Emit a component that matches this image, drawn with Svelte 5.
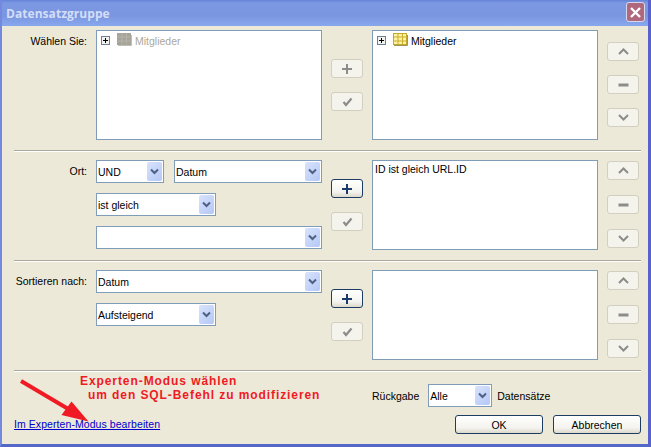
<script>
</script>

{#snippet chevron()}
  <span class="arrow">
    <svg width="9" height="7" viewBox="0 0 9 7"><path d="M1 1.5 L4.5 5 L8 1.5" fill="none" stroke="#4d6185" stroke-width="2"/></svg>
  </span>
{/snippet}

{#snippet select(text, cls)}
  <div class="select {cls}"><span class="value">{text}</span>{@render chevron()}</div>
{/snippet}

{#snippet plusBtn(active)}
  <div class="btn" class:active>
    <svg width="12" height="12" viewBox="0 0 12 12"><path d="M6 1 V11 M1 6 H11" stroke={active ? '#1d3a6c' : '#8c8c8c'} stroke-width="2" fill="none"/></svg>
  </div>
{/snippet}

{#snippet checkBtn()}
  <div class="btn">
    <svg width="11" height="10" viewBox="0 0 11 10"><path d="M1.5 5 L4 8 L9.5 1.5" stroke="#8c8c8c" stroke-width="2.2" fill="none"/></svg>
  </div>
{/snippet}

{#snippet sideBtns()}
  <div class="side">
    <div class="btn"><svg width="11" height="7" viewBox="0 0 11 7"><path d="M1 6 L5.5 1.5 L10 6" stroke="#8c8c8c" stroke-width="2" fill="none"/></svg></div>
    <div class="btn"><svg width="11" height="4" viewBox="0 0 11 4"><path d="M0.5 2 H10.5" stroke="#8c8c8c" stroke-width="3" fill="none"/></svg></div>
    <div class="btn"><svg width="11" height="7" viewBox="0 0 11 7"><path d="M1 1 L5.5 5.5 L10 1" stroke="#8c8c8c" stroke-width="2" fill="none"/></svg></div>
  </div>
{/snippet}

{#snippet treeRow(name, on)}
  <div class="tree" class:off={!on}>
    <span class="expander"><svg width="9" height="9" viewBox="0 0 9 9"><rect x=".5" y=".5" width="8" height="8" fill="#f2f2ee" stroke="#6f8096"/><path d="M2 4.5 H7 M4.5 2 V7" stroke="#000"/></svg></span>
    {#if on}
      <svg class="table" width="15" height="13" viewBox="0 0 15 13"><rect x=".5" y=".5" width="13" height="11" fill="#fdf3a0" stroke="#c2a82c"/><path d="M.5 4 H13.5 M.5 8 H13.5 M5 .5 V11.5 M9.5 .5 V11.5" stroke="#c9ae30"/><path d="M1 12.5 H14.5 V2" stroke="#9c9560" fill="none"/></svg>
    {:else}
      <svg class="table" width="15" height="13" viewBox="0 0 15 13"><rect x="0" y="0" width="14" height="12" fill="#a6a49a"/><path d="M.5 4 H13.5 M.5 8 H13.5 M5 .5 V11.5 M9.5 .5 V11.5" stroke="#b5b3a9"/><path d="M1 12.5 H14.5 V2" stroke="#c0beb2" fill="none"/></svg>
    {/if}
    <span>{name}</span>
  </div>
{/snippet}

<div class="window">
  <header class="titlebar">
    <span class="title">Datensatzgruppe</span>
    <span class="close"><svg width="11" height="11" viewBox="0 0 11 11"><path d="M1 1 L10 10 M10 1 L1 10" stroke="#fff" stroke-width="2.4"/></svg></span>
  </header>

  <section class="row one">
    <div class="label">Wählen Sie:</div>
    <div class="list left">{@render treeRow('Mitglieder', false)}</div>
    <div class="mid">{@render plusBtn(false)}{@render checkBtn()}</div>
    <div class="list">{@render treeRow('Mitglieder', true)}</div>
    {@render sideBtns()}
  </section>
  <hr />

  <section class="row two">
    <div class="label">Ort:</div>
    <div class="fields">
      <div class="pair">{@render select('UND', 'w68')}{@render select('Datum', 'grow pad')}</div>
      {@render select('ist gleich', 'w120')}
      {@render select('', 'full')}
    </div>
    <div class="mid">{@render plusBtn(true)}{@render checkBtn()}</div>
    <div class="list note">ID ist gleich URL.ID</div>
    {@render sideBtns()}
  </section>
  <hr />

  <section class="row three">
    <div class="label">Sortieren nach:</div>
    <div class="fields">
      {@render select('Datum', 'full')}
      {@render select('Aufsteigend', 'w120')}
    </div>
    <div class="mid">{@render plusBtn(true)}{@render checkBtn()}</div>
    <div class="list"></div>
    {@render sideBtns()}
  </section>
  <hr />

  <footer class="footer">
    <a class="link" href="#expert">Im Experten-Modus bearbeiten</a>
    <div class="footer-right">
      <div class="return">
        <span>Rückgabe</span>
        {@render select('Alle', 'w64 shifted')}
        <span>Datensätze</span>
      </div>
      <div class="actions">
        <div class="action">OK</div>
        <div class="action">Abbrechen</div>
      </div>
    </div>
  </footer>

  <div class="note-red"><div>Experten-Modus wählen</div><div class="second">um den SQL-Befehl zu modifizieren</div></div>
  <svg class="red-arrow" width="100" height="62" viewBox="0 0 100 62"><path d="M21 21 L70 50" stroke="#f01a24" stroke-width="4" fill="none"/><path d="M71.5 41.5 L61.5 55 L88.5 61.5 Z" fill="#f01a24"/></svg>
</div>

<style>
  :global(body) { margin: 0; }
  .window {
    position: relative;
    width: 651px;
    height: 447px;
    box-sizing: border-box;
    background: #ece9d8;
    border-left: 2px solid #7488e0;
    border-right: 3px solid #5862cc;
    border-bottom: 3px solid #5468c8;
    font: 10.5px "Liberation Sans", Arial, sans-serif;
    color: #000;
    overflow: hidden;
  }
  .titlebar {
    height: 26px;
    margin-left: -2px;
    margin-right: -3px;
    padding-left: 6px;
    display: flex;
    align-items: center;
    background: linear-gradient(#6583d8 0, #7c98e2 3px, #7a96e0 16px, #88a8ee 26px);
    position: relative;
  }
  .title {
    font: bold 12px "Open Sans", sans-serif;
    color: #d3def8;
    letter-spacing: 0.05px;
  }
  .close {
    position: absolute;
    left: 626px;
    top: 2px;
    width: 17px;
    height: 18px;
    border: 1px solid #d8d8ec;
    border-radius: 3px;
    background: #b0687f;
    display: flex;
    align-items: center;
    justify-content: center;
  }
  .row {
    display: grid;
    grid-template-columns: 94px 226px 50px 226px 1fr;
    align-items: start;
  }
  .one { padding-top: 4px; height: 120px; }
  .two { padding-top: 9px; height: 100px; }
  .three { padding-top: 9px; height: 100px; }
  hr {
    border: 0;
    height: 1px;
    background: #aca899;
    margin: 0 7px 0 12px;
    box-shadow: 0 1px 0 #fff;
  }
  .label {
    text-align: right;
    padding-right: 9px;
    padding-top: 5px;
  }
  .list {
    background: #fff;
    border: 1px solid #7f9db9;
    box-sizing: border-box;
    height: 110px;
  }
  .two .list, .three .list { height: 90px; }
  .note { padding: 2px 2px; }
  .tree {
    display: flex;
    align-items: center;
    height: 13px;
    margin: 3px 0 0 4px;
  }
  .tree.off { color: #aca899; }
  .expander { display: flex; width: 16px; }
  .table { margin-right: 3px; margin-top: -2px; }
  .mid {
    display: flex;
    flex-direction: column;
    gap: 14px;
    padding: 29px 0 0 9px;
  }
  .two .mid, .three .mid { padding-top: 19px; }
  .side {
    display: flex;
    flex-direction: column;
    gap: 14px;
    padding: 12px 0 0 9px;
  }
  .two .side, .three .side { padding-top: 1px; gap: 15px; }
  .btn {
    width: 32px;
    height: 19px;
    box-sizing: border-box;
    background: #f4f3ec;
    border: 1px solid #d2cfc0;
    border-radius: 3px;
    display: flex;
    align-items: center;
    justify-content: center;
  }
  .btn.active {
    border-color: #1c3c64;
    background: linear-gradient(#fff, #f4f3ee 70%, #dcd8ca);
  }
  .fields {
    display: flex;
    flex-direction: column;
    gap: 10px;
  }
  .pair { display: flex; gap: 10px; }
  .select {
    height: 23px;
    box-sizing: border-box;
    border: 1px solid #7f9db9;
    background: #fff;
    display: flex;
    align-items: center;
    justify-content: space-between;
    padding: 1px;
  }
  .value { padding-left: 0; }
  .w68 { width: 68px; }
  .w64 { width: 64px; }
  .w120 { width: 120px; }
  .full { width: 226px; }
  .grow { flex: 1; }
  .shifted { margin-left: 4px; }
  .arrow {
    width: 15px;
    height: 19px;
    background: linear-gradient(135deg, #d8e3fc, #b4c7f6);
    border-radius: 2px;
    display: flex;
    align-items: center;
    justify-content: center;
  }
  .footer {
    position: relative;
    flex: 1;
  }
  .link {
    position: absolute;
    left: 12px;
    top: 47px;
    color: #0000cc;
    text-decoration: underline;
    letter-spacing: 0.07px;
  }
  .footer-right {
    position: absolute;
    right: 7px;
    top: 13px;
    width: 270px;
  }
  .return {
    display: flex;
    align-items: center;
    gap: 5px;
    margin-left: 1px;
  }
  .actions {
    display: flex;
    justify-content: flex-end;
    gap: 10px;
    margin-top: 8px;
  }
  .action {
    width: 88px;
    height: 19px;
    box-sizing: border-box;
    border: 1px solid #1c3c64;
    border-radius: 3px;
    background: linear-gradient(#fff, #f4f3ee 70%, #dcd8ca);
    display: flex;
    align-items: center;
    justify-content: center;
  }
  .note-red {
    position: absolute;
    left: 78px;
    top: 374px;
    font: bold 12px "Liberation Sans", sans-serif;
    letter-spacing: 0.92px;
    line-height: 14px;
    color: #f01a24;
  }
  .second { margin-left: 8px; }
  .red-arrow {
    position: absolute;
    left: -2px;
    top: 360px;
    overflow: visible;
  }
</style>
